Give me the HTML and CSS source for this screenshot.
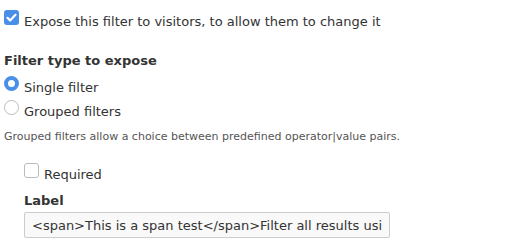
FILE: index.html
```html
<!DOCTYPE html>
<html lang="en">
<head>
    <meta charset="UTF-8">
    <meta name="viewport" content="width=device-width, initial-scale=1.0">
    <title>Expose filter</title>
    <link rel="stylesheet" href="styles.css">
</head>
<body>
    <div class="form-item">
        <label class="option"><input type="checkbox" class="check" checked> Expose this filter to visitors, to allow them to change it</label>
    </div>

    <fieldset class="radios">
        <legend>Filter type to expose</legend>
        <label class="option"><input type="radio" name="type" class="radio" checked> Single filter</label>
        <label class="option"><input type="radio" name="type" class="radio"> Grouped filters</label>
        <div class="description">Grouped filters allow a choice between predefined operator|value pairs.</div>
    </fieldset>

    <div class="details">
        <label class="option"><input type="checkbox" class="check"> Required</label>
        <label class="field-label" for="label">Label</label>
        <input type="text" id="label" class="text" value="<span>This is a span test</span>Filter all results using">
    </div>
</body>
</html>
```

FILE: styles.css
```css
body {
    margin: 0;
    padding: 10px 4px;
    font-family: "DejaVu Sans", sans-serif;
    font-size: 13px;
    line-height: 15px;
    color: #333;
    background: #fff;
}

.option {
    display: flex;
    align-items: center;
    gap: 5px;
}

.check,
.radio {
    appearance: none;
    margin: 0 0 8px;
    width: 15px;
    height: 15px;
    flex: none;
    box-sizing: border-box;
}

.check {
    border: 1px solid #bbb;
    border-radius: 3px;
    background: #fff;
}

.check:checked {
    border: none;
    background: #4a8fe7 url("data:image/svg+xml,%3Csvg xmlns='http://www.w3.org/2000/svg' viewBox='0 0 15 15'%3E%3Cpath d='M3.5 7.8l2.6 2.6 5.4-5.6' fill='none' stroke='%23fff' stroke-width='2.2' stroke-linecap='round' stroke-linejoin='round'/%3E%3C/svg%3E");
}

.radio {
    border: 1px solid #bbb;
    border-radius: 50%;
    background: #fff;
}

.radio:checked {
    border: 4px solid #4a8fe7;
}

.radios {
    border: none;
    margin: 20px 0 0;
    padding: 0;
}

.radios legend {
    padding: 0;
    font-weight: bold;
    margin-bottom: 8px;
}

.radios .option + .option {
    margin-top: 1px;
}

.description {
    font-size: 11px;
    line-height: 13px;
    color: #555;
    margin-top: 7px;
}

.details {
    padding: 20px 0 0 20px;
}

.field-label {
    display: block;
    font-weight: bold;
    margin: 7px 0 4px;
}

.text {
    width: 366px;
    height: 26px;
    box-sizing: border-box;
    border: 1px solid #ccc;
    border-radius: 2px;
    background: #f9f9f9;
    font-family: "DejaVu Sans", sans-serif;
    font-size: 13px;
    color: #333;
    padding: 0 7px;
}
```
